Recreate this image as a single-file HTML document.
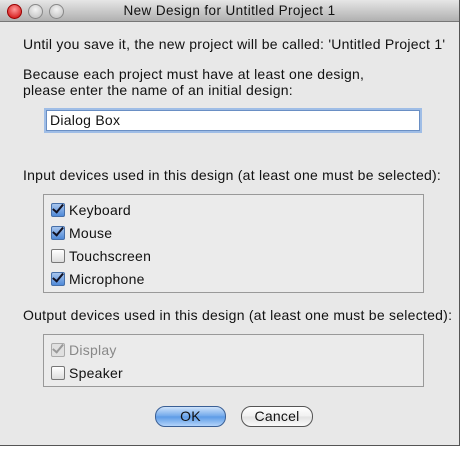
<!DOCTYPE html><html><head><style>
body{margin:0;width:463px;height:449px;background:#fff;overflow:hidden;font-family:"Liberation Sans",sans-serif;font-size:14px;letter-spacing:0.25px;color:#111}
.win{position:absolute;left:0;top:0;width:459px;height:445px;background:#e8e8e8;border-right:1px solid #555;border-bottom:1px solid #555}
.tb{position:absolute;left:0;top:0;width:459px;height:21px;background:linear-gradient(#e6e6e6,#b0b0b0);border-bottom:1px solid #777;text-align:center;line-height:21px;font-size:13.5px;letter-spacing:0.4px}
.dot{position:absolute;top:4px;width:13px;height:13px;border-radius:50%;border:1px solid #888;background:radial-gradient(circle at 50% 35%,#f4f4f4,#bbb)}
.t{position:absolute;left:23px;white-space:nowrap}
.inp{position:absolute;left:46px;top:110px;width:369px;height:19px;background:#fff;border:1px solid #6a8fc4;box-shadow:0 0 0 2px #9fbde6;line-height:19px;padding-left:3px}
.box{position:absolute;left:43px;width:379px;border:1px solid #999;background:#ebebeb}
.cb{position:absolute;left:51px;width:12px;height:12px;border:1px solid #777;border-radius:2px;background:linear-gradient(#fff,#ddd)}
.cb.on{background:linear-gradient(#a7c6ee,#4f8ad8);border-color:#466fa8}
.cb.on:after{content:"";position:absolute;left:3px;top:-2px;width:4px;height:9px;border:solid #112;border-width:0 2.5px 2.5px 0;transform:rotate(40deg)}
.cb.dis{background:#e0e0e0;border-color:#aaa}
.cb.dis:after{content:"";position:absolute;left:3px;top:-2px;width:4px;height:9px;border:solid #999;border-width:0 2.5px 2.5px 0;transform:rotate(40deg)}
.l{position:absolute;left:69px}
.btn{position:absolute;top:406px;height:19px;border-radius:10px;border:1px solid #555;text-align:center;line-height:19px;font-size:14px}
</style></head><body><div class="win">
<div class="tb">New Design for Untitled Project 1
<div class="dot" style="left:7px;background:radial-gradient(circle at 50% 35%,#f99,#c00);border-color:#900"></div>
<div class="dot" style="left:28px"></div><div class="dot" style="left:49px"></div></div>
<div class="t" style="top:36px">Until you save it, the new project will be called: 'Untitled Project 1'</div>
<div class="t" style="top:66px">Because each project must have at least one design,</div>
<div class="t" style="top:82px">please enter the name of an initial design:</div>
<div class="inp">Dialog Box</div>
<div class="t" style="top:167px">Input devices used in this design (at least one must be selected):</div>
<div class="box" style="top:194px;height:97px"></div>
<div class="cb on" style="top:203px"></div><div class="l" style="top:202px">Keyboard</div>
<div class="cb on" style="top:226px"></div><div class="l" style="top:225px">Mouse</div>
<div class="cb" style="top:249px"></div><div class="l" style="top:248px">Touchscreen</div>
<div class="cb on" style="top:272px"></div><div class="l" style="top:271px">Microphone</div>
<div class="t" style="top:307px">Output devices used in this design (at least one must be selected):</div>
<div class="box" style="top:334px;height:51px"></div>
<div class="cb dis" style="top:343px"></div><div class="l" style="top:342px;color:#888">Display</div>
<div class="cb" style="top:366px"></div><div class="l" style="top:365px">Speaker</div>
<div class="btn" style="left:155px;width:69px;background:linear-gradient(#cfe3fb,#6ea6ea 50%,#5b9ae6 51%,#b3d4fa);border-color:#3a5f95">OK</div>
<div class="btn" style="left:241px;width:70px;background:linear-gradient(#fff,#f0f0f0 50%,#e2e2e2 51%,#fafafa)">Cancel</div>
</div></body></html>
